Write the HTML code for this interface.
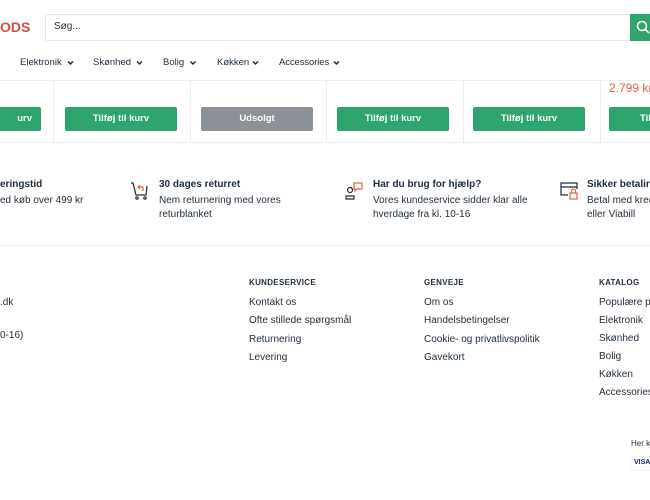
<!DOCTYPE html>
<html><head><meta charset="utf-8"><style>
*{margin:0;padding:0;box-sizing:border-box}
body{width:650px;height:500px;overflow:hidden;background:#fff;font-family:"Liberation Sans",sans-serif;color:#1e2d3d;position:relative;font-size:10px}
.a{position:absolute;white-space:nowrap}
.btn{position:absolute;top:107px;height:24px;background:#2ea46f;color:#fff;font-size:9.5px;font-weight:bold;text-align:center;line-height:24px;border-radius:2px}
.vd{position:absolute;top:81px;height:61px;width:1px;background:#ebeef0}
.h{font-weight:bold;font-size:10px}
.t{font-size:10px;line-height:14px}
.fh{font-weight:bold;font-size:8px;letter-spacing:.3px}
.fl{font-size:10px}
.n{font-size:9.5px;top:57px}
</style></head><body>
<div class="a" style="left:0;top:19px;color:#d4503d;font-weight:bold;font-size:14px">ODS</div>
<div class="a" style="left:45px;top:14px;width:590px;height:27px;border:1px solid #e6e9ec;border-radius:2px"></div>
<div class="a" style="left:54px;top:21px;font-size:10px">Søg...</div>
<div class="a" style="left:630px;top:14px;width:20px;height:27px;background:#2ea46f"></div>
<svg class="a" style="left:636px;top:20px" width="14" height="14"><circle cx="6" cy="6" r="4.5" stroke="#fff" stroke-width="1.6" fill="none"/><path d="M9.5 9.5L13 13" stroke="#fff" stroke-width="1.6"/></svg>
<div class="a n" style="left:20px">Elektronik</div>
<div class="a n" style="left:93px">Skønhed</div>
<div class="a n" style="left:163px">Bolig</div>
<div class="a n" style="left:217px">Køkken</div>
<div class="a n" style="left:279px;letter-spacing:-0.1px">Accessories</div>
<svg class="a" style="left:0;top:58px" width="650" height="10"><g stroke="#1e2d3d" stroke-width="1.5" fill="none"><path d="M68 3.5l2.5 2.5 2.5-2.5"/><path d="M137 3.5l2.5 2.5 2.5-2.5"/><path d="M190.5 3.5l2.5 2.5 2.5-2.5"/><path d="M253 3.5l2.5 2.5 2.5-2.5"/><path d="M334 3.5l2.5 2.5 2.5-2.5"/></g></svg>
<div class="a" style="left:0;top:80px;width:650px;height:1px;background:#ebeef0"></div>
<div class="a" style="left:0;top:142px;width:650px;height:1px;background:#ebeef0"></div>
<div class="vd" style="left:53px"></div><div class="vd" style="left:190px"></div><div class="vd" style="left:326px"></div><div class="vd" style="left:463px"></div><div class="vd" style="left:600px"></div>
<div class="a" style="left:609px;top:81px;color:#e2604c;font-size:12px">2.799 kr</div>
<div class="btn" style="left:-72px;width:113px;text-align:right;padding-right:9px">urv</div>
<div class="btn" style="left:65px;width:112px">Tilføj til kurv</div>
<div class="btn" style="left:201px;width:112px;background:#8b9196">Udsolgt</div>
<div class="btn" style="left:337px;width:112px">Tilføj til kurv</div>
<div class="btn" style="left:473px;width:112px">Tilføj til kurv</div>
<div class="btn" style="left:609px;width:112px;text-align:left;padding-left:31px">Til</div>
<div class="a h" style="left:0;top:179px">eringstid</div>
<div class="a t" style="left:0;top:194px">ed køb over 499 kr</div>
<svg class="a" style="left:130px;top:181px" width="20" height="20" fill="none" stroke="#1e2d3d" stroke-width="1.2"><path d="M1 2h2l3 12h10l1-9"/><circle cx="7" cy="17" r="1.2"/><circle cx="15" cy="17" r="1.2"/><path d="M10 4l-2 2 2 2M8 6h5v4" stroke="#e2604c"/></svg>
<div class="a h" style="left:159px;top:179px">30 dages returret</div>
<div class="a t" style="left:159px;top:194px">Nem returnering med vores<br>returblanket</div>
<svg class="a" style="left:345px;top:181px" width="20" height="20" fill="none" stroke-width="1.2"><circle cx="5" cy="9" r="2.5" stroke="#1e2d3d"/><path d="M1 18v-3h8v3z" stroke="#1e2d3d"/><path d="M9 2h8v6h-5l-2 2v-2H9z" stroke="#e2604c"/></svg>
<div class="a h" style="left:373px;top:179px">Har du brug for hjælp?</div>
<div class="a t" style="left:373px;top:194px">Vores kundeservice sidder klar alle<br>hverdage fra kl. 10-16</div>
<svg class="a" style="left:559px;top:181px" width="20" height="20" fill="none" stroke-width="1.2"><path d="M9 14H2V2h16v6M2 6h16" stroke="#1e2d3d"/><rect x="11" y="12" width="7" height="6" stroke="#e2604c"/><path d="M12.5 12v-2a2 2 0 0 1 4 0v2" stroke="#e2604c"/></svg>
<div class="a h" style="left:587px;top:179px">Sikker betaling</div>
<div class="a t" style="left:587px;top:194px">Betal med kred<br>eller Viabill</div>
<div class="a" style="left:0;top:245px;width:650px;height:1px;background:#ebeef0"></div>
<div class="a fl" style="left:0;top:297px">.dk</div>
<div class="a fl" style="left:0;top:330px">0-16)</div>
<div class="a fh" style="left:249px;top:278px">KUNDESERVICE</div>
<div class="a fl" style="left:249px;top:297px">Kontakt os</div>
<div class="a fl" style="left:249px;top:315px">Ofte stillede spørgsmål</div>
<div class="a fl" style="left:249px;top:334px">Returnering</div>
<div class="a fl" style="left:249px;top:352px">Levering</div>
<div class="a fh" style="left:424px;top:278px">GENVEJE</div>
<div class="a fl" style="left:424px;top:297px">Om os</div>
<div class="a fl" style="left:424px;top:315px">Handelsbetingelser</div>
<div class="a fl" style="left:424px;top:334px">Cookie- og privatlivspolitik</div>
<div class="a fl" style="left:424px;top:352px">Gavekort</div>
<div class="a fh" style="left:599px;top:278px">KATALOG</div>
<div class="a fl" style="left:599px;top:297px">Populære pr</div>
<div class="a fl" style="left:599px;top:315px">Elektronik</div>
<div class="a fl" style="left:599px;top:333px">Skønhed</div>
<div class="a fl" style="left:599px;top:351px">Bolig</div>
<div class="a fl" style="left:599px;top:369px">Køkken</div>
<div class="a fl" style="left:599px;top:387px">Accessories</div>
<div class="a" style="left:631px;top:439px;font-size:8px">Her k</div>
<div class="a" style="left:630px;top:456px;width:25px;height:15px;border:1px solid #eef0f2;border-radius:2px"></div>
<div class="a" style="left:634px;top:459px;font-size:7px;font-weight:bold;color:#1a1f71">VISA</div>
</body></html>
